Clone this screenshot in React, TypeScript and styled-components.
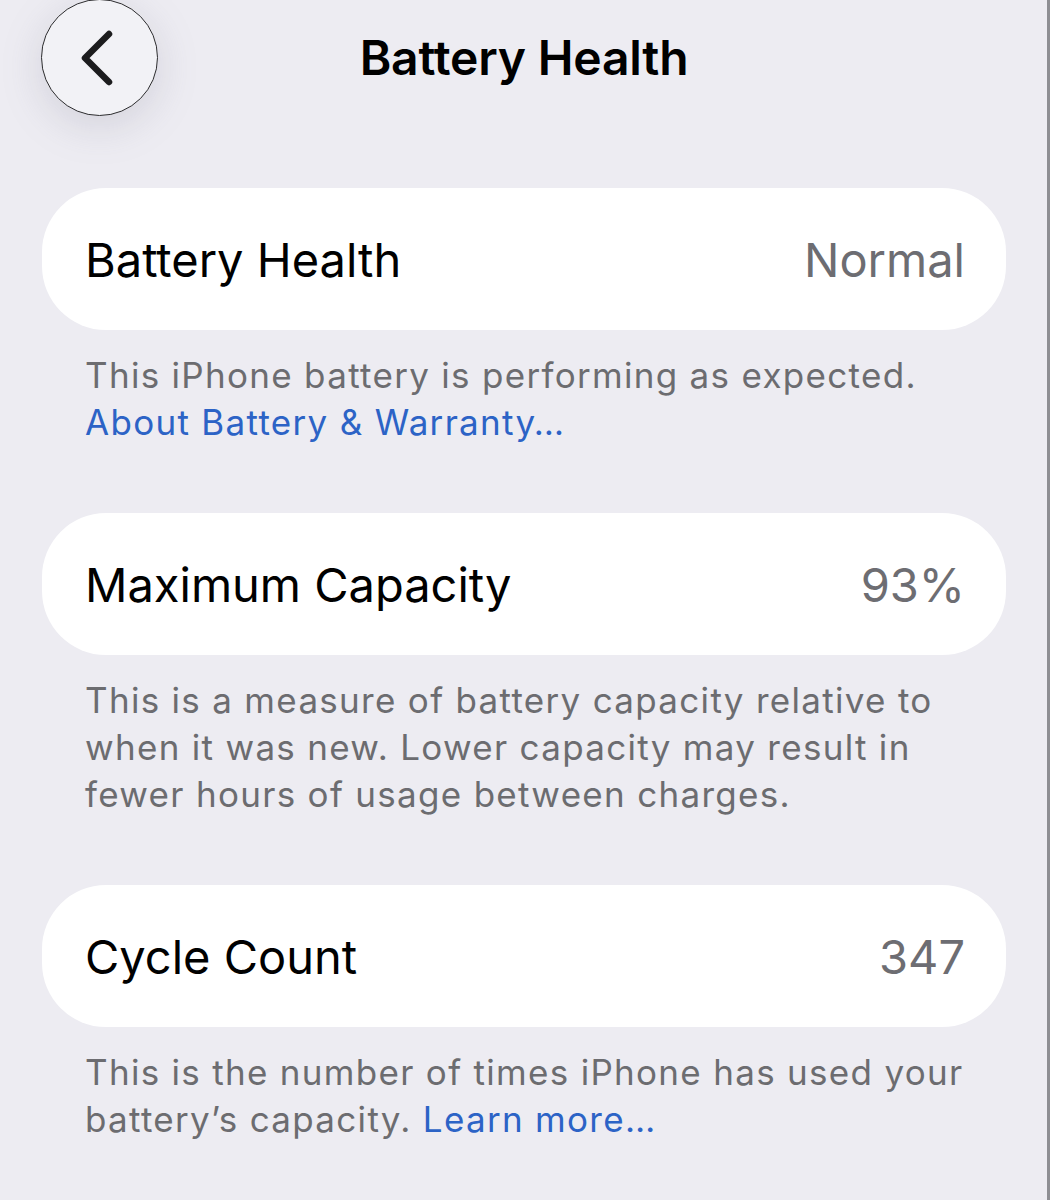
import React from 'react';
import styled, { createGlobalStyle } from 'styled-components';

const GlobalStyle = createGlobalStyle`
  html, body {
    margin: 0;
    padding: 0;
    background: #edecf2;
  }
  body {
    font-family: Inter, "Noto Sans", "Liberation Sans", sans-serif;
    -webkit-font-smoothing: antialiased;
  }
`;

type Section = {
  label: string;
  value: string;
  note: string;
  link?: string;
  linkOnNewLine?: boolean;
};

const sections: Section[] = [
  {
    label: 'Battery Health',
    value: 'Normal',
    note: 'This iPhone battery is performing as expected.',
    link: 'About Battery & Warranty…',
    linkOnNewLine: true,
  },
  {
    label: 'Maximum Capacity',
    value: '93%',
    note: 'This is a measure of battery capacity relative to when it was new. Lower capacity may result in fewer hours of usage between charges.',
  },
  {
    label: 'Cycle Count',
    value: '347',
    note: 'This is the number of times iPhone has used your battery\u2019s capacity.',
    link: 'Learn more…',
  },
];

export default function App() {
  return (
    <Screen>
      <GlobalStyle />
      <Header>
        <BackButton aria-label="Back">
          <svg width="40" height="56" viewBox="0 0 40 56" fill="none">
            <path
              d="M32 4 L8 28 L32 52"
              stroke="#1c1c1e"
              strokeWidth="6.5"
              strokeLinecap="round"
              strokeLinejoin="round"
            />
          </svg>
        </BackButton>
        <Title>Battery Health</Title>
      </Header>

      <List>
        {sections.map(s => (
          <Group key={s.label}>
            <Card>
              <Label>{s.label}</Label>
              <Value>{s.value}</Value>
            </Card>
            <Footnote>
              {s.note}
              {s.link && (s.linkOnNewLine ? <br /> : ' ')}
              {s.link && <Link href="#">{s.link}</Link>}
            </Footnote>
          </Group>
        ))}
      </List>
    </Screen>
  );
}

const Screen = styled.div`
  box-sizing: border-box;
  width: 1050px;
  min-height: 1200px;
  padding: 0 41px 0 42px;
  background: #edecf2;
  border-right: 3px solid #8e8e93;
`;

const Header = styled.header`
  position: relative;
  height: 188px;
  display: flex;
  justify-content: center;
`;

const BackButton = styled.button`
  position: absolute;
  left: -1px;
  top: -1px;
  box-sizing: border-box;
  width: 117px;
  height: 117px;
  border-radius: 50%;
  border: 1.5px solid #2c2c2e;
  background: #f2f2f6;
  box-shadow: 0 10px 40px rgba(120, 120, 140, 0.22);
  display: flex;
  align-items: center;
  justify-content: center;
  padding: 0 6px 0 0;
  cursor: pointer;
`;

const Title = styled.h1`
  margin: 0;
  height: 115px;
  line-height: 115px;
  font-size: 48px;
  font-weight: 600;
  letter-spacing: -0.2px;
  color: #000;
`;

const List = styled.main`
  display: flex;
  flex-direction: column;
`;

const Group = styled.section`
  display: flex;
  flex-direction: column;
`;

const Card = styled.div`
  height: 142px;
  border-radius: 64px;
  background: #ffffff;
  display: flex;
  align-items: center;
  justify-content: space-between;
  padding: 0 41px 0 43px;
`;

const Label = styled.span`
  font-size: 47px;
  color: #000;
`;

const Value = styled.span`
  font-size: 47px;
  color: #6d6d72;
`;

const Footnote = styled.p`
  margin: 0;
  padding: 22px 0 67px 43px;
  font-size: 35px;
  line-height: 47px;
  color: #6c6c70;
  letter-spacing: 1.3px;
`;

const Link = styled.a`
  color: #2c63c6;
  text-decoration: none;
`;
